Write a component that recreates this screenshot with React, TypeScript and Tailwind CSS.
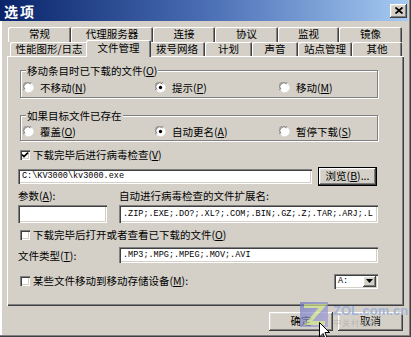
import React from 'react';

const raised =
  'shadow-[inset_-1px_-1px_0_#404040,inset_1px_1px_0_#fff,inset_-2px_-2px_0_#808080,inset_2px_2px_0_#dfdcd6]';
const sunken =
  'shadow-[inset_1px_1px_0_#808080,inset_2px_2px_0_#404040,inset_-1px_-1px_0_#fff,inset_-2px_-2px_0_#d4d0c8]';

const row1: [string, number][] = [
  ['常规', 63],
  ['代理服务器', 82],
  ['连接', 62],
  ['协议', 63],
  ['监视', 61],
  ['镜像', 63],
];

const row2: [string, number, boolean?][] = [
  ['性能图形/日志', 78],
  ['文件管理', 61, true],
  ['拨号网络', 56],
  ['计划', 47],
  ['声音', 46],
  ['站点管理', 54],
  ['其他', 50],
];

function Radio({ checked }: { checked?: boolean }) {
  return (
    <svg width="11" height="11" viewBox="0 0 12 12" className="shrink-0">
      <circle cx="6" cy="6" r="5.5" fill="#fff" />
      <path d="M1.3 9.2 A5.3 5.3 0 0 1 9.2 1.3" fill="none" stroke="#8a8a8a" strokeWidth="1" />
      <path d="M2.2 8.3 A4.2 4.2 0 0 1 8.3 2.2" fill="none" stroke="#505050" strokeWidth="0.8" />
      {checked && <circle cx="6" cy="6" r="1.8" fill="#000" />}
    </svg>
  );
}

function Check({ checked }: { checked?: boolean }) {
  return (
    <span className={`w-[10px] h-[10px] shrink-0 bg-white flex items-center justify-center ${sunken}`}>
      {checked && (
        <svg width="8" height="8" viewBox="0 0 8 8">
          <path d="M1 3.6 L3 5.6 L7 1.6" stroke="#000" strokeWidth="1.7" fill="none" />
        </svg>
      )}
    </span>
  );
}

function Opt({ label, k, checked, w }: { label: string; k: string; checked?: boolean; w?: string }) {
  return (
    <div className={`flex items-center gap-[6px] ${w ?? ''}`}>
      <Radio checked={checked} />
      <span>
        {label}(<u>{k}</u>)
      </span>
    </div>
  );
}

function Field({ text, className }: { text?: string; className: string }) {
  return (
    <div
      className={`bg-white ${sunken} flex items-center pl-[4px] font-['Liberation_Mono',monospace] text-[8.5px] whitespace-nowrap overflow-hidden ${className}`}
    >
      {text}
    </div>
  );
}

export default function App() {
  return (
    <div className="w-[411px] h-[337px] relative overflow-hidden bg-[#d4d0c8] text-black text-[10.5px] font-['Noto_Sans_CJK_SC','Liberation_Sans',sans-serif] shadow-[inset_-1px_-1px_0_#404040,inset_-2px_-2px_0_#808080,inset_2px_0_0_#fff] flex flex-col">
      {/* title bar */}
      <div className="h-[21px] mr-[3px] flex items-center justify-between bg-gradient-to-r from-[#0a246a] via-[#4a6db4] to-[#a6caf0]">
        <span className="pl-[4px] text-white font-bold text-[14px] tracking-[2px] leading-none">选项</span>
        <div className={`w-[17px] h-[14px] mr-[1px] bg-[#d4d0c8] ${raised} flex items-center justify-center`}>
          <svg width="8" height="7" viewBox="0 0 8 7">
            <path d="M0.5 0.5 L7.5 6.5 M7.5 0.5 L0.5 6.5" stroke="#000" strokeWidth="1.8" />
          </svg>
        </div>
      </div>

      {/* tabs */}
      <div className="mt-[6px] ml-[8px] flex h-[15px]">
        {row1.map(([t, w]) => (
          <div
            key={t}
            style={{ width: w }}
            className="h-[15px] rounded-t-[2px] flex items-center justify-center leading-none shadow-[inset_1px_1px_0_#fff,inset_-1px_0_0_#404040,inset_-2px_0_0_#808080]"
          >
            {t}
          </div>
        ))}
      </div>
      <div className="ml-[10px] flex h-[14px]">
        {row2.map(([t, w, sel]) =>
          sel ? (
            <div
              key={t}
              style={{ width: w + 4 }}
              className="relative z-10 -mx-[2px] -mt-[2px] h-[17px] bg-[#d4d0c8] rounded-t-[2px] flex items-start pt-[2px] justify-center leading-[12px] shadow-[inset_1px_1px_0_#fff,inset_-1px_0_0_#404040,inset_-2px_0_0_#808080]"
            >
              {t}
            </div>
          ) : (
            <div
              key={t}
              style={{ width: w }}
              className="h-[14px] bg-[#d4d0c8] rounded-t-[2px] flex items-center justify-center leading-none shadow-[inset_1px_1px_0_#fff,inset_-1px_0_0_#404040,inset_-2px_0_0_#808080]"
            >
              {t}
            </div>
          )
        )}
      </div>

      {/* panel */}
      <div className="ml-[7px] w-[397px] h-[250px] pl-[11px] flex flex-col shadow-[inset_1px_1px_0_#fff,inset_-1px_-1px_0_#404040,inset_-2px_-2px_0_#808080]">
        <fieldset className="ml-[2px] mt-[7px] w-[358px] border border-[#808080] px-[2px] pb-[2px] shadow-[1px_1px_0_#fff,inset_1px_1px_0_#fff]">
          <legend className="ml-[3px] px-[1px] leading-[15px] bg-[#d4d0c8]">
            移动条目时已下载的文件(<u>O</u>)
          </legend>
          <div className="mt-[2px] h-[15px] flex items-center">
            <Opt label="不移动" k="N" w="w-[132px]" />
            <Opt label="提示" k="P" checked w="w-[124px]" />
            <Opt label="移动" k="M" />
          </div>
        </fieldset>

        <fieldset className="ml-[2px] mt-[10px] w-[358px] border border-[#808080] px-[2px] pb-[1px] shadow-[1px_1px_0_#fff,inset_1px_1px_0_#fff]">
          <legend className="ml-[3px] px-[1px] leading-[15px] bg-[#d4d0c8]">如果目标文件已存在</legend>
          <div className="mt-[1px] h-[15px] flex items-center">
            <Opt label="覆盖" k="O" w="w-[132px]" />
            <Opt label="自动更名" k="A" checked w="w-[124px]" />
            <Opt label="暂停下载" k="S" />
          </div>
        </fieldset>

        <div className="ml-[2px] mt-[6px] h-[15px] flex items-center gap-[3px]">
          <Check checked />
          <span>
            下载完毕后进行病毒检查(<u>V</u>)
          </span>
        </div>

        <div className="mt-[5px] h-[19px] flex items-center">
          <Field text={'C:\\KV3000\\kv3000.exe'} className="w-[294px] h-[15px]" />
          <button
            type="button"
            className={`ml-[6px] w-[59px] h-[19px] border border-black bg-[#d4d0c8] ${raised} flex items-center justify-center leading-none`}
          >
            浏览(<u>B</u>)...
          </button>
        </div>

        <div className="mt-[2px] h-[15px] flex items-center">
          <span className="w-[101px]">
            参数(<u>A</u>):
          </span>
          <span>自动进行病毒检查的文件扩展名:</span>
        </div>

        <div className="mt-[2px] flex">
          <Field className="w-[89px] h-[18px]" />
          <Field
            text=".ZIP;.EXE;.DO?;.XL?;.COM;.BIN;.GZ;.Z;.TAR;.ARJ;.L"
            className="ml-[12px] w-[259px] h-[18px]"
          />
        </div>

        <div className="ml-[2px] mt-[4px] h-[15px] flex items-center gap-[3px]">
          <Check />
          <span>
            下载完毕后打开或者查看已下载的文件(<u>O</u>)
          </span>
        </div>

        <div className="mt-[5px] flex items-center">
          <span className="w-[101px] pt-[1px]">
            文件类型(<u>T</u>):
          </span>
          <Field text=".MP3;.MPG;.MPEG;.MOV;.AVI" className="w-[259px] h-[16px]" />
        </div>

        <div className="mt-[10px] w-[360px] h-[15px] flex items-center justify-between">
          <div className="ml-[2px] flex items-center gap-[3px]">
            <Check />
            <span>
              某些文件移动到移动存储设备(<u>M</u>):
            </span>
          </div>
          <div className={`w-[44px] h-[15px] bg-white ${sunken} flex items-center justify-between pl-[4px] pr-[2px]`}>
            <span className="font-['Liberation_Mono',monospace] text-[8.5px]">A:</span>
            <span className={`w-[13px] h-[11px] bg-[#d4d0c8] ${raised} flex items-center justify-center`}>
              <svg width="7" height="4" viewBox="0 0 7 4">
                <path d="M0 0 H7 L3.5 4 Z" fill="#000" />
              </svg>
            </span>
          </div>
        </div>
      </div>

      {/* buttons */}
      <div className="mt-[6px] pr-[8px] flex justify-end gap-[5px]">
        <button type="button" className={`w-[64px] h-[19px] bg-[#d4d0c8] ${raised} leading-none`}>
          确定
        </button>
        <button type="button" className={`w-[65px] h-[19px] bg-[#d4d0c8] ${raised} leading-none`}>
          取消
        </button>
      </div>

      {/* watermark */}
      <div className="absolute left-[300px] top-[302px] opacity-70 pointer-events-none">
        <svg width="28" height="25" viewBox="0 0 28 25">
          <defs>
            <linearGradient id="zg" x1="0" y1="0" x2="1" y2="1">
              <stop offset="0" stopColor="#7078c4" />
              <stop offset="1" stopColor="#a6a2d6" />
            </linearGradient>
          </defs>
          <rect width="28" height="25" fill="url(#zg)" />
          <path d="M4 4 H23 L8 21 H25" stroke="#cfe38c" strokeWidth="4" fill="none" />
        </svg>
      </div>
      <div className="absolute left-[333px] top-[304px] flex flex-col pointer-events-none leading-none">
        <span className="font-['Liberation_Sans',sans-serif] font-bold text-[13px] text-[#a3b3d6]">ZOL.com.cn</span>
        <span className="mt-[2px] text-[8px] text-[#b8b6b2] tracking-[1px]">中关村在线</span>
      </div>

      {/* cursor */}
      <svg className="absolute left-[319px] top-[322px] pointer-events-none" width="12" height="19" viewBox="0 0 12 19">
        <path d="M0.5 0.5 V15 L4 11.5 L6.5 17.5 L8.5 16.5 L6 10.5 H10.5 Z" fill="#fff" stroke="#000" />
      </svg>
    </div>
  );
}
